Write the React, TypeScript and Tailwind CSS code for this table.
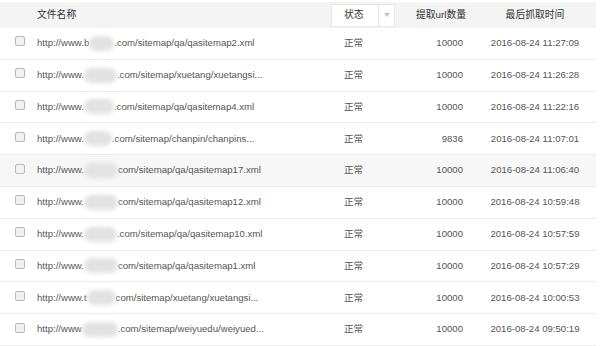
import React from "react";

interface Row {
  pre: string;
  blur: number;
  post: string;
  count: string;
  time: string;
}

const rows: Row[] = [
  { pre: "http://www.b", blur: 25, post: ".com/sitemap/qa/qasitemap2.xml", count: "10000", time: "2016-08-24 11:27:09" },
  { pre: "http://www.", blur: 33, post: ".com/sitemap/xuetang/xuetangsi...", count: "10000", time: "2016-08-24 11:26:28" },
  { pre: "http://www.", blur: 30, post: ".com/sitemap/qa/qasitemap4.xml", count: "10000", time: "2016-08-24 11:22:16" },
  { pre: "http://www.", blur: 28, post: ".com/sitemap/chanpin/chanpins...", count: "9836", time: "2016-08-24 11:07:01" },
  { pre: "http://www.", blur: 34, post: "com/sitemap/qa/qasitemap17.xml", count: "10000", time: "2016-08-24 11:06:40" },
  { pre: "http://www.", blur: 34, post: "com/sitemap/qa/qasitemap12.xml", count: "10000", time: "2016-08-24 10:59:48" },
  { pre: "http://www.", blur: 33, post: ".com/sitemap/qa/qasitemap10.xml", count: "10000", time: "2016-08-24 10:57:59" },
  { pre: "http://www.", blur: 34, post: "com/sitemap/qa/qasitemap1.xml", count: "10000", time: "2016-08-24 10:57:29" },
  { pre: "http://www.t", blur: 29, post: "com/sitemap/xuetang/xuetangsi...", count: "10000", time: "2016-08-24 10:00:53" },
  { pre: "http://www", blur: 36, post: ".com/sitemap/weiyuedu/weiyued...", count: "10000", time: "2016-08-24 09:50:19" },
];

const cols = "grid grid-cols-[37px_294px_64px_79px_122px]";

export default function App() {
  return (
    <div className="w-[600px] h-[346px] bg-white overflow-hidden text-[9.6px] text-[#555] [font-family:'Liberation_Sans','Noto_Sans_CJK_SC',sans-serif]">
      <div className="pt-[2px]">
        <div className={`${cols} w-[596px] h-[26px] items-center bg-[#f4f4f4] text-[#333] text-[9.8px]`}>
          <div />
          <div>文件名称</div>
          <div className="h-[23px] flex items-center bg-white border border-[#e8e8e8]">
            <span className="pl-[12px] w-[46px]">状态</span>
            <span className="h-full border-l border-[#e8e8e8] flex-1 flex items-center justify-center">
              <svg width="6" height="4" viewBox="0 0 6 4">
                <path d="M0 0H6L3 4Z" fill="#c4c4c4" />
              </svg>
            </span>
          </div>
          <div className="text-right pr-[8px] whitespace-nowrap">提取url数量</div>
          <div className="text-center">最后抓取时间</div>
        </div>
      </div>
      {rows.map((r, i) => (
        <div
          key={i}
          className={`${cols} w-[596px] h-[31.8px] items-center border-b border-[#ebebeb] ${i === 4 ? "bg-[#f7f7f7]" : ""}`}
        >
          <div className="flex justify-center pl-[2px] pb-[4px]">
            <span className="w-[10px] h-[10px] rounded-[2px] border border-[#b8b8b8] bg-[#f2f2f2]" />
          </div>
          <div className="flex items-center whitespace-nowrap">
            <span>{r.pre}</span>
            <span
              className="inline-block h-[15px] rounded-full bg-[#e2e2e2] blur-[2px]"
              style={{ width: r.blur }}
            />
            <span>{r.post}</span>
          </div>
          <div className="pl-[13px]">正常</div>
          <div className="text-right pr-[11px]">{r.count}</div>
          <div className="text-center">{r.time}</div>
        </div>
      ))}
    </div>
  );
}
